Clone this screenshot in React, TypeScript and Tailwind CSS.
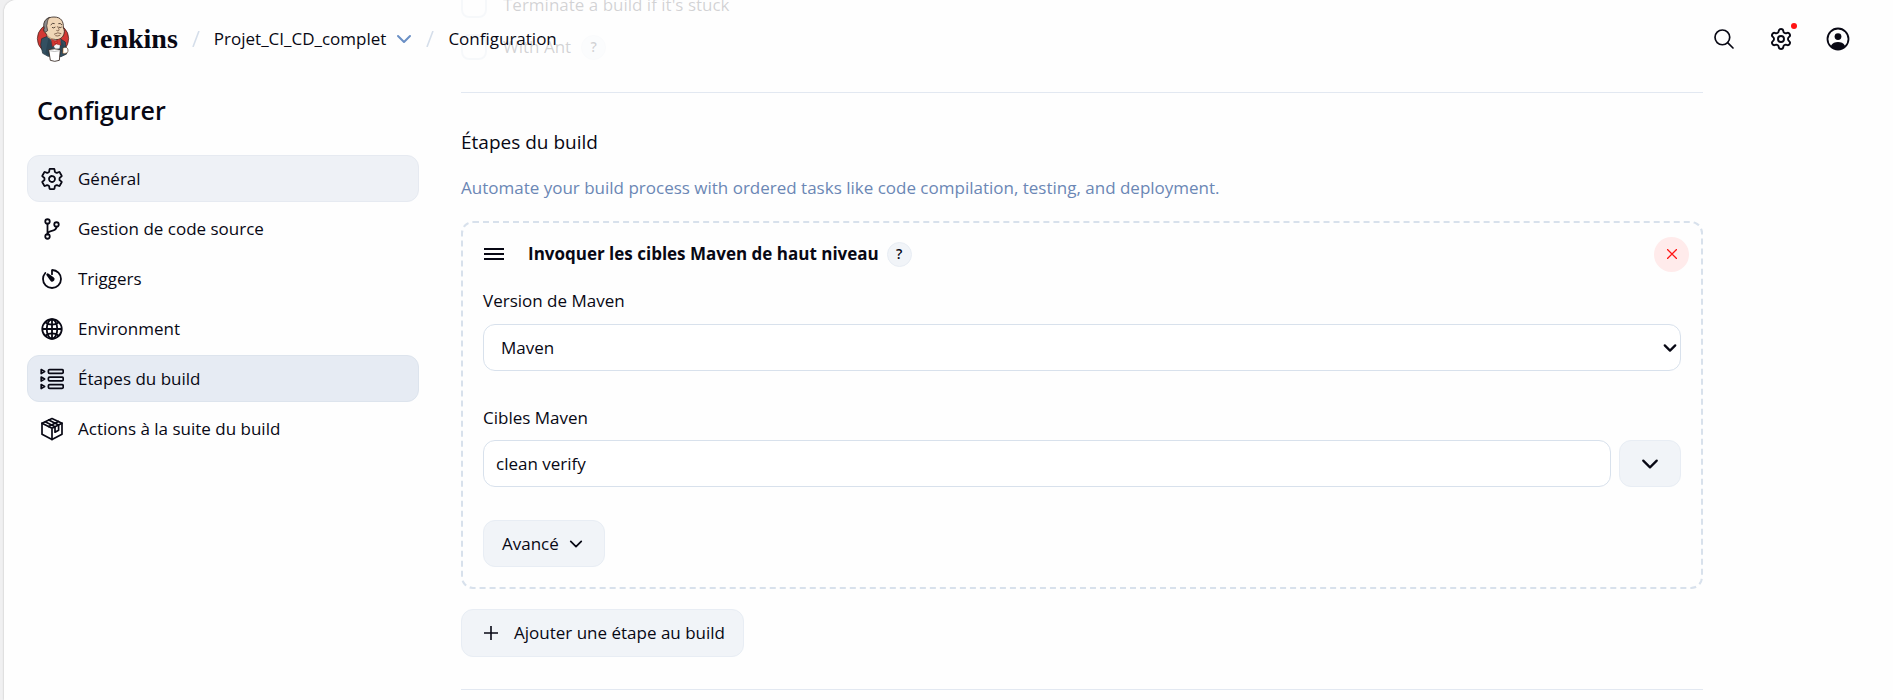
import { useState } from "react";
import type { ReactNode } from "react";
import { IoGitBranchOutline, IoGlobeOutline, IoSearchOutline, IoSettingsOutline, IoTimerOutline } from "react-icons/io5";
import { Settings } from "lucide-react";

function JenkinsLogo() {
  return (
    <svg viewBox="0 0 102 138" className="h-[46px] w-[34px] shrink-0" aria-hidden="true">
      <ellipse cx="51" cy="68" rx="47" ry="46" fill="#d33833" stroke="#30231d" strokeWidth="2" />
      <path d="M17 68 L34 61 L50 70 L72 68 L88 78 L92 114 L75 122 L36 121 L20 112 L14 86 Z" fill="#335061" stroke="#1d2b33" strokeWidth="2" />
      <path d="M44 68 L72 66 L76 96 L58 100 Z" fill="#f7f7f7" />
      <path d="M38 64 L52 98 L40 120 L28 112 Z" fill="#2b4453" />
      <path d="M75 70 L70 100 L80 112 L88 98 Z" fill="#2b4453" />
      <path d="M25 36 C20 12 36 3 54 3 C76 3 83 17 82 35 C87 44 85 50 83 56 C79 68 65 73 55 70 C42 70 33 61 30 52 C24 50 22 42 25 36 Z" fill="#f0d6b7" stroke="#30231d" strokeWidth="2.5" />
      <path d="M25 37 C19 16 32 7 41 4 C32 14 36 19 32 29 L35 44 L29 48 C24 46 22 41 25 37 Z" fill="#8b8b8d" stroke="#30231d" strokeWidth="2" />
      <path d="M32 51 C36 60 44 68 55 71 L48 72 L35 64 Z" fill="#d3aa85" />
      <path d="M44 27 Q50 19 56 23 M67 23 Q73 20 78 27 M48 34 Q53 38 58 33 M68 33 Q73 37 77 33" fill="none" stroke="#30231d" strokeWidth="2.4" />
      <path d="M64 31 Q73 43 66 45 L61 43 M54 55 Q66 47 76 53 M58 59 Q66 62 73 57" fill="none" stroke="#6d4c3a" strokeWidth="2.4" />
      <path d="M46 70 L58 74 L72 69 L75 88 L61 84 L49 92 Z" fill="#d33833" stroke="#7e1f1c" strokeWidth="1.5" />
      <circle cx="60" cy="79" r="4" fill="#ef3d3a" stroke="#7e1f1c" strokeWidth="1.5" />
      <path d="M80 97 C86 90 96 94 96 103 C96 112 88 116 79 112 Z" fill="#f0d6b7" stroke="#30231d" strokeWidth="2" />
      <path d="M84 97 L93 96 L94 108 L84 110 Z" fill="#ffffff" />
      <path d="M38 101 Q55 96 73 101 L70 133 Q56 139 43 133 Z" fill="#ffffff" stroke="#30231d" strokeWidth="2.5" />
      <path d="M40 104 Q55 109 71 104" fill="none" stroke="#9a9a9a" strokeWidth="2" />
    </svg>
  );
}

function Chevron({ className }: { className: string }) {
  return (
    <svg viewBox="0 0 16 16" fill="none" stroke="currentColor" strokeWidth="2" strokeLinecap="round" strokeLinejoin="round" className={className} aria-hidden="true">
      <path d="M2 5 L8 11 L14 5" />
    </svg>
  );
}

function Slash() {
  return (
    <svg viewBox="0 0 8 16" className="h-4 w-2 shrink-0 text-[#d5deea]" aria-hidden="true">
      <path d="M7 0 L1 16" stroke="currentColor" strokeWidth="1.6" />
    </svg>
  );
}

function AccountIcon() {
  return (
    <svg viewBox="0 0 24 24" className="size-6" aria-hidden="true">
      <circle cx="12" cy="12" r="10.5" fill="none" stroke="currentColor" strokeWidth="1.8" />
      <circle cx="12" cy="9.6" r="3.4" fill="currentColor" />
      <path d="M4.8 19 C6.6 15.8 9 15 12 15 C15 15 17.4 15.8 19.2 19 C17 21.6 14.6 22.5 12 22.5 C9.4 22.5 7 21.6 4.8 19 Z" fill="currentColor" />
    </svg>
  );
}

function StepsIcon() {
  return (
    <svg viewBox="0 0 24 24" fill="none" stroke="currentColor" strokeWidth="1.7" strokeLinejoin="round" className="size-6" aria-hidden="true">
      {[4.5, 12, 19.5].map((y) => (
        <g key={y}>
          <path d={`M1.2 ${y - 2} L4.6 ${y} L1.2 ${y + 2} Z`} />
          <rect x="8.4" y={y - 1.9} width="14.8" height="3.8" rx="1.2" />
        </g>
      ))}
    </svg>
  );
}

function PackageIcon() {
  return (
    <svg viewBox="0 0 24 24" fill="none" stroke="currentColor" strokeWidth="1.7" strokeLinejoin="round" strokeLinecap="round" className="size-6" aria-hidden="true">
      <path d="M12 1.5 L22 6.2 V17.3 L12 22.6 L2 17.3 V6.2 Z" />
      <path d="M2 6.2 L12 11.3 L22 6.2 M12 11.3 V22.4" />
      <path d="M5.2 4.8 L15 9.8 V15.2 L18.6 13.3 V7.9 L8.8 3" />
      <path d="M8.6 9.6 L18.4 4.5" />
    </svg>
  );
}

const sections: { label: string; icon: ReactNode }[] = [
  { label: "Général", icon: <IoSettingsOutline className="size-6 [&_*]:[stroke-width:38px]" /> },
  { label: "Gestion de code source", icon: <IoGitBranchOutline className="size-6 [&_*]:[stroke-width:38px]" /> },
  { label: "Triggers", icon: <IoTimerOutline className="size-6 [&_*]:[stroke-width:38px]" /> },
  { label: "Environment", icon: <IoGlobeOutline className="size-6 [&_*]:[stroke-width:38px]" /> },
  { label: "Étapes du build", icon: <StepsIcon /> },
  { label: "Actions à la suite du build", icon: <PackageIcon /> },
];

const itemTone: Record<string, string> = {
  "Général": "border-[#e6eaf1] bg-[#eef1f6]",
  "Étapes du build": "border-[#dde4ed] bg-[#e6ebf3]",
};

function Header() {
  return (
    <header className="absolute inset-x-0 top-0 z-10 flex h-20 items-center bg-[#fefefe]/80 pr-[43px] pb-[3px] pl-8">
      <a href="#home" className="flex items-center gap-4">
        <JenkinsLogo />
        <span className="font-['Liberation_Serif',serif] text-[28px] leading-8 font-bold">Jenkins</span>
      </a>
      <nav aria-label="Fil d'Ariane" className="ml-3.5 flex items-center gap-3.5">
        <Slash />
        <a href="#projet">Projet_CI_CD_complet</a>
        <button type="button" aria-label="Menu du projet" className="-ml-1 text-[#6a8fc5]">
          <Chevron className="size-4" />
        </button>
        <Slash />
        <span>Configuration</span>
      </nav>
      <div className="ml-auto flex items-center gap-[33px]">
        <button type="button" aria-label="Rechercher">
          <IoSearchOutline className="size-6 [&_*]:[stroke-width:36px]" />
        </button>
        <button type="button" aria-label="Administrer Jenkins" className="relative">
          <Settings className="size-6" strokeWidth={1.9} />
          <span className="absolute -top-1 -right-1 size-1.5 rounded-full bg-[#ff1414]" />
        </button>
        <button type="button" aria-label="Compte">
          <AccountIcon />
        </button>
      </div>
    </header>
  );
}

function Sidebar() {
  return (
    <aside className="w-[392px] shrink-0 pt-24">
      <h1 className="px-2.5 text-[25px] leading-7 font-semibold">Configurer</h1>
      <ul className="mt-[31px] flex flex-col gap-[3px]">
        {sections.map(({ label, icon }) => (
          <li key={label}>
            <a
              href="#section"
              className={`flex h-[47px] items-center gap-3.5 rounded-xl border px-3 ${itemTone[label] ?? "border-transparent"}`}
            >
              {icon}
              <span>{label}</span>
            </a>
          </li>
        ))}
      </ul>
    </aside>
  );
}

function HelpButton() {
  return (
    <button type="button" aria-label="Aide" className="flex size-[25px] items-center justify-center rounded-full border border-[#e8edf4] bg-[#f1f4f8] text-sm font-semibold">
      ?
    </button>
  );
}

function BuildStep() {
  const [version, setVersion] = useState("Maven");
  const [goals, setGoals] = useState("clean verify");
  return (
    <div className="mt-[21px] rounded-xl border-2 border-dashed border-[#d8e1ec] px-5 pt-[13px] pb-5">
      <div className="-mr-2 flex h-9 items-center">
        <button type="button" aria-label="Déplacer">
          <svg viewBox="0 0 20 12" className="mx-px h-3 w-5" aria-hidden="true">
            <path d="M0 1 H20 M0 6 H20 M0 11 H20" stroke="currentColor" strokeWidth="1.9" />
          </svg>
        </button>
        <h3 className="mr-2 ml-[23px] font-bold">Invoquer les cibles Maven de haut niveau</h3>
        <HelpButton />
        <button type="button" aria-label="Supprimer" className="ml-auto flex size-[35px] items-center justify-center rounded-full bg-[#ffebeb] text-[#ff1414]">
          <svg viewBox="0 0 10 10" className="size-2.5" aria-hidden="true">
            <path d="M0 0 L10 10 M10 0 L0 10" stroke="currentColor" strokeWidth="1.3" />
          </svg>
        </button>
      </div>

      <label htmlFor="maven-version" className="mt-[17px] block">Version de Maven</label>
      <div className="relative mt-[11px]">
        <select
          id="maven-version"
          value={version}
          onChange={(e) => setVersion(e.target.value)}
          className="block h-[47px] w-full appearance-none rounded-xl border border-[#d8e1ec] bg-white px-[17px]"
        >
          <option>Maven</option>
        </select>
        <Chevron className="pointer-events-none absolute top-[17px] right-1 size-3.5 stroke-[2.6]" />
      </div>

      <label htmlFor="maven-goals" className="mt-[35px] block">Cibles Maven</label>
      <div className="mt-2.5 flex gap-2">
        <input
          id="maven-goals"
          value={goals}
          onChange={(e) => setGoals(e.target.value)}
          className="h-[47px] min-w-0 flex-1 rounded-xl border border-[#d8e1ec] bg-white px-3"
        />
        <button type="button" aria-label="Agrandir" className="flex h-[47px] w-[62px] items-center justify-center rounded-xl border border-[#e8edf4] bg-[#f1f4f8]">
          <Chevron className="size-[18px]" />
        </button>
      </div>

      <button type="button" className="mt-[33px] flex h-[47px] items-center gap-2.5 rounded-xl border border-[#e8edf4] bg-[#f1f4f8] pr-[21px] pl-[18px]">
        Avancé
        <Chevron className="size-3.5" />
      </button>
    </div>
  );
}

export default function App() {
  return (
    <div className="h-screen overflow-hidden bg-[#f0f0f1] pl-1 font-['Open_Sans','Noto_Sans',sans-serif] text-[17px] leading-6 text-[#080814]">
      <div className="relative flex h-full gap-[42px] overflow-hidden rounded-tl-xl bg-[#fefefe] pl-[23px] shadow-[0_0_2px_rgba(0,0,0,0.25)]">
        <Header />
        <Sidebar />
        <main className="-mt-2 min-w-0 flex-1 pr-[190px]">
          <div className="flex flex-col gap-4 text-[#080814]/90">
            <label className="flex items-center gap-4">
              <input type="checkbox" className="size-[26px] appearance-none rounded-lg border-2 border-[#d8e1ec]" />
              Terminate a build if it's stuck
            </label>
            <div className="flex items-center gap-2.5">
              <label className="flex items-center gap-4">
                <input type="checkbox" className="size-[26px] appearance-none rounded-lg border-2 border-[#d8e1ec]" />
                With Ant
              </label>
              <HelpButton />
            </div>
          </div>
          <section className="mt-8 border-t border-[#e2e8f1] pt-[37px]">
            <h2 className="text-[19px] leading-6">Étapes du build</h2>
            <p className="mt-[22px] text-[#6b87b5]">
              Automate your build process with ordered tasks like code compilation, testing, and deployment.
            </p>
            <BuildStep />
            <button type="button" className="mt-5 flex h-12 items-center gap-3 rounded-xl border border-[#e8edf4] bg-[#f1f4f8] px-[18px]">
              <svg viewBox="0 0 14 14" className="mx-1 size-3.5" aria-hidden="true">
                <path d="M7 0 V14 M0 7 H14" stroke="currentColor" strokeWidth="1.6" />
              </svg>
              Ajouter une étape au build
            </button>
          </section>
          <section className="mt-8 border-t border-[#e2e8f1]" />
        </main>
      </div>
    </div>
  );
}
